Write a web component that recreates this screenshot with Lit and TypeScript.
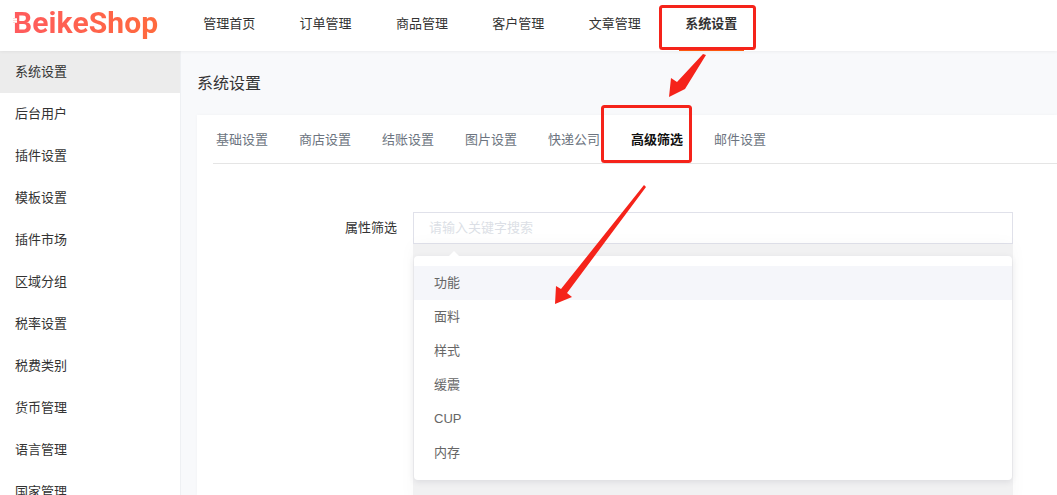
import { LitElement, html, css, svg } from 'lit';
import { customElement, property } from 'lit/decorators.js';

const NAV = ['管理首页', '订单管理', '商品管理', '客户管理', '文章管理', '系统设置'];
const SIDE = ['系统设置', '后台用户', '插件设置', '模板设置', '插件市场', '区域分组', '税率设置', '税费类别', '货币管理', '语言管理', '国家管理'];
const TABS = ['基础设置', '商店设置', '结账设置', '图片设置', '快递公司', '高级筛选', '邮件设置'];
const OPTIONS = ['功能', '面料', '样式', '缓震', 'CUP', '内存'];

@customElement('app-root')
export class AppRoot extends LitElement {
  static styles = css`
    :host {
      display: block;
      position: relative;
      height: 495px;
      overflow: hidden;
      background: #f8f9fb;
      color: #333;
      font-family: 'Liberation Sans', 'Noto Sans CJK SC', sans-serif;
      font-size: 13px;
    }

    .header {
      position: relative;
      z-index: 2;
      display: flex;
      height: 51px;
      background: #fff;
      box-shadow: 0 1px 3px rgba(0, 0, 0, 0.05);
    }
    .logo {
      position: relative;
      box-sizing: border-box;
      width: 181px;
      padding: 5px 0 0 13px;
    }
    .logo span {
      font-family: Roboto, 'Liberation Sans', sans-serif;
      font-size: 30px;
      font-weight: 700;
      line-height: 36px;
      letter-spacing: 0.1px;
      background: linear-gradient(90deg, #ff5b5e, #ff6a3d);
      -webkit-background-clip: text;
      background-clip: text;
      color: transparent;
    }
    .logo::before {
      content: '';
      position: absolute;
      top: 18px;
      left: 13px;
      width: 4px;
      height: 5px;
      background: repeating-linear-gradient(#ffd9d4 0, #ffd9d4 1px, #fff 1px, #fff 2px);
    }
    .nav {
      display: flex;
    }
    .nav a {
      position: relative;
      padding: 0 22.2px;
      line-height: 47px;
      color: #333;
    }
    .nav a.active {
      font-weight: 700;
    }
    .nav a.active::after {
      content: '';
      position: absolute;
      left: 16px;
      right: 15px;
      bottom: 0;
      height: 1px;
      background: #fd560f;
    }

    .body {
      display: flex;
      height: 444px;
    }
    .side {
      flex: none;
      box-sizing: border-box;
      width: 181px;
      height: 444px;
      overflow: hidden;
      background: #fff;
      border-right: 1px solid #eef0f3;
    }
    .side div {
      height: 42px;
      padding-left: 15px;
      line-height: 42px;
      color: #333;
    }
    .side div.active {
      background: #ececec;
    }

    .main {
      flex: 1;
      padding-left: 16px;
    }
    .title {
      height: 64px;
      font-size: 16px;
      line-height: 66px;
      color: #333;
    }
    .card {
      height: 380px;
      padding: 0 0 0 16px;
      background: #fff;
      box-shadow: 0 0 4px rgba(0, 0, 0, 0.03);
    }
    .tabs {
      display: flex;
      gap: 31px;
      height: 48px;
      padding-left: 3px;
      border-bottom: 1px solid #e5e5e5;
      line-height: 50px;
      color: #6c7480;
    }
    .tabs .active {
      font-weight: 700;
      color: #111;
    }

    .row {
      display: flex;
      margin-top: 48px;
    }
    .row label {
      width: 184px;
      line-height: 32px;
      text-align: right;
      color: #333;
    }
    .field {
      position: relative;
      margin-left: 16px;
    }
    .input {
      box-sizing: border-box;
      width: 600px;
      height: 32px;
      padding-left: 15px;
      border: 1px solid #e0e1ea;
      line-height: 30px;
      color: #dcdfe6;
    }

    /* grey block the dropdown's shadow sits on, cut off square at the field's edges */
    .band {
      position: absolute;
      top: 32px;
      left: 0;
      width: 600px;
      height: 260px;
      background: #f1f1f2;
      box-shadow: 0 0 16px rgba(0, 0, 0, 0.03);
    }
    .menu {
      position: absolute;
      top: 44px;
      left: 1px;
      box-sizing: border-box;
      width: 598px;
      height: 224px;
      padding: 10px 0;
      background: #fff;
      border-radius: 4px;
      box-shadow: 0 2px 6px rgba(40, 40, 70, 0.1);
    }
    .menu::before {
      content: '';
      position: absolute;
      top: -5px;
      left: 35px;
      border: 5px solid transparent;
      border-top: 0;
      border-bottom-color: #fff;
    }
    .menu div {
      height: 34px;
      padding-left: 20px;
      line-height: 34px;
      color: #666;
    }
    .menu div.hover {
      background: #f5f6fa;
    }

    .marks {
      position: absolute;
      top: 0;
      left: 0;
      z-index: 3;
      pointer-events: none;
    }
  `;

  @property({ type: Number })
  activeTab = 5;

  private _marks() {
    return svg`
      <rect x="660.5" y="6.5" width="94" height="42" rx="2" fill="none" stroke="#f5231a" stroke-width="3" />
      <rect x="602.5" y="106.5" width="88" height="55" rx="2" fill="none" stroke="#f5231a" stroke-width="3" />
      <polygon fill="#f5231a" points="703,54 706,55 685,89 669,97 671,78 677,82" />
      <polygon fill="#f5231a" points="644,185 646,187 567,293 572,297 555,304 556,286 561,289" />
    `;
  }

  render() {
    return html`
      <div class="header">
        <div class="logo"><span>BeikeShop</span></div>
        <div class="nav">
          ${NAV.map((n, i) => html`<a class=${i === 5 ? 'active' : ''}>${n}</a>`)}
        </div>
      </div>
      <div class="body">
        <div class="side">
          ${SIDE.map((s, i) => html`<div class=${i === 0 ? 'active' : ''}>${s}</div>`)}
        </div>
        <div class="main">
          <div class="title">系统设置</div>
          <div class="card">
            <div class="tabs">
              ${TABS.map((t, i) => html`<span class=${i === this.activeTab ? 'active' : ''}>${t}</span>`)}
            </div>
            <div class="row">
              <label>属性筛选</label>
              <div class="field">
                <div class="input">请输入关键字搜索</div>
                <div class="band"></div>
                <div class="menu">
                  ${OPTIONS.map((o, i) => html`<div class=${i === 0 ? 'hover' : ''}>${o}</div>`)}
                </div>
              </div>
            </div>
          </div>
        </div>
      </div>
      <svg class="marks" width="1057" height="495">${this._marks()}</svg>
    `;
  }
}
